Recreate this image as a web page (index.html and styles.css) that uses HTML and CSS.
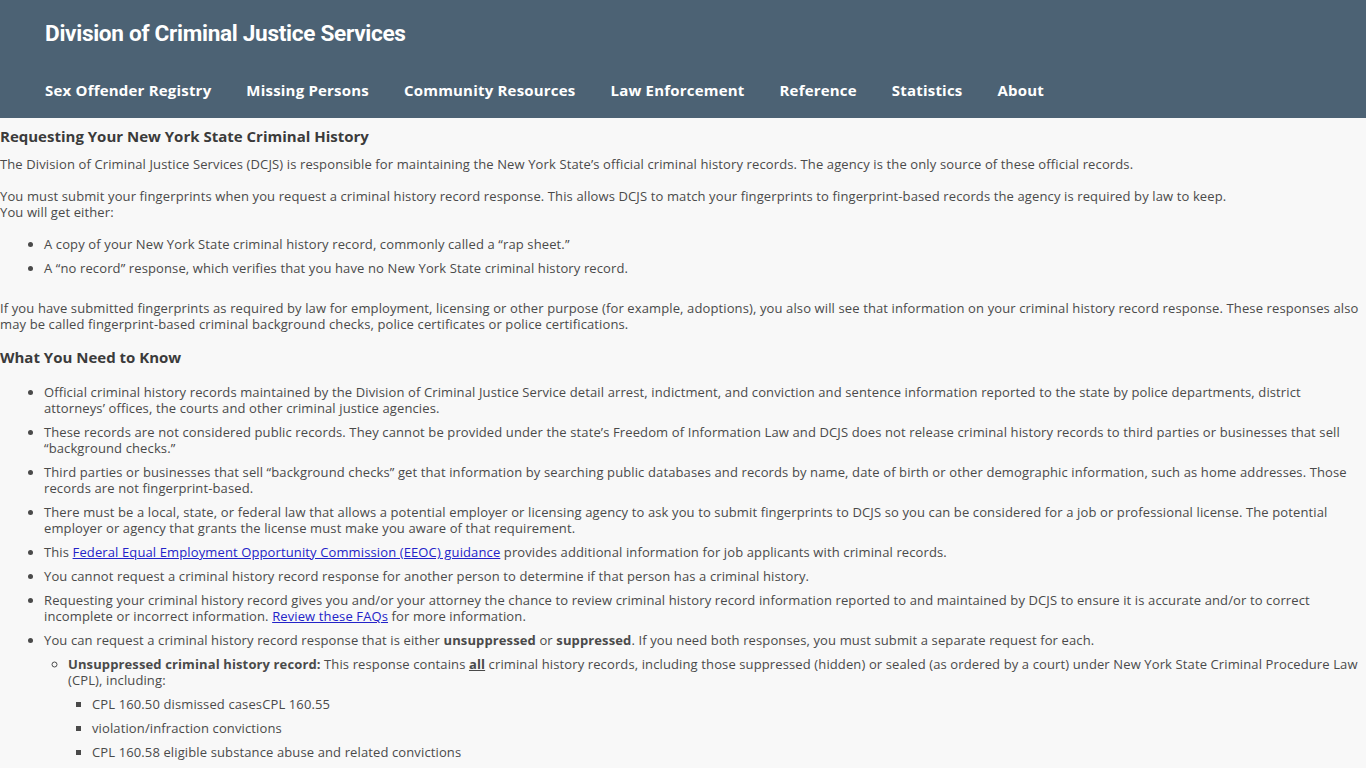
FILE: index.html
```html
<!DOCTYPE html>
<html lang="en">
<head>
    <meta charset="UTF-8">
    <title>Requesting Your New York State Criminal History | DCJS</title>
    <link rel="stylesheet" href="styles.css">
</head>
<body>
    <header class="site-header">
        <div class="site-title">Division of Criminal Justice Services</div>
        <nav class="main-nav">
            <a href="#">Sex Offender Registry</a>
            <a href="#">Missing Persons</a>
            <a href="#">Community Resources</a>
            <a href="#">Law Enforcement</a>
            <a href="#">Reference</a>
            <a href="#">Statistics</a>
            <a href="#">About</a>
        </nav>
    </header>
    <main class="content">
        <h2>Requesting Your New York State Criminal History</h2>
        <p>The Division of Criminal Justice Services (DCJS) is responsible for maintaining the New York State’s official criminal history records. The agency is the only source of these official records.</p>
        <p>You must submit your fingerprints when you request a criminal history record response. This allows DCJS to match your fingerprints to fingerprint-based records the agency is required by law to keep.<br>You will get either:</p>
        <ul>
            <li>A copy of your New York State criminal history record, commonly called a “rap sheet.”</li>
            <li>A “no record” response, which verifies that you have no New York State criminal history record.</li>
        </ul>
        <p>If you have submitted fingerprints as required by law for employment, licensing or other purpose (for example, adoptions), you also will see that information on your criminal history record response. These responses also may be called fingerprint-based criminal background checks, police certificates or police certifications.</p>
        <h2>What You Need to Know</h2>
        <ul>
            <li>Official criminal history records maintained by the Division of Criminal Justice Service detail arrest, indictment, and conviction and sentence information reported to the state by police departments, district attorneys’ offices, the courts and other criminal justice agencies.</li>
            <li>These records are not considered public records. They cannot be provided under the state’s Freedom of Information Law and DCJS does not release criminal history records to third parties or businesses that sell “background checks.”</li>
            <li>Third parties or businesses that sell “background checks” get that information by searching public databases and records by name, date of birth or other demographic information, such as home addresses. Those records are not fingerprint-based.</li>
            <li>There must be a local, state, or federal law that allows a potential employer or licensing agency to ask you to submit fingerprints to DCJS so you can be considered for a job or professional license. The potential employer or agency that grants the license must make you aware of that requirement.</li>
            <li>This <a href="#">Federal Equal Employment Opportunity Commission (EEOC) guidance</a> provides additional information for job applicants with criminal records.</li>
            <li>You cannot request a criminal history record response for another person to determine if that person has a criminal history.</li>
            <li>Requesting your criminal history record gives you and/or your attorney the chance to review criminal history record information reported to and maintained by DCJS to ensure it is accurate and/or to correct incomplete or incorrect information. <a href="#">Review these FAQs</a> for more information.</li>
            <li>You can request a criminal history record response that is either <strong>unsuppressed</strong> or <strong>suppressed</strong>. If you need both responses, you must submit a separate request for each.
                <ul>
                    <li><strong>Unsuppressed criminal history record:</strong> This response contains <strong><u>all</u></strong> criminal history records, including those suppressed (hidden) or sealed (as ordered by a court) under New York State Criminal Procedure Law (CPL), including:
                        <ul>
                            <li>CPL 160.50 dismissed casesCPL 160.55</li>
                            <li>violation/infraction convictions</li>
                            <li>CPL 160.58 eligible substance abuse and related convictions</li>
                        </ul>
                    </li>
                </ul>
            </li>
        </ul>
    </main>
</body>
</html>
```

FILE: styles.css
```css
body {
    margin: 0;
    background: #f8f8f8;
    color: #4a4a4a;
    font-family: 'Open Sans', 'Liberation Sans', sans-serif;
    font-size: 13px;
    line-height: 16px;
    letter-spacing: 0.12px;
}
.site-header {
    background: #4c6274;
    height: 118px;
    padding: 0 45px;
    box-sizing: border-box;
}
.site-title {
    color: #fff;
    font-family: 'Roboto', 'Open Sans', sans-serif;
    font-size: 22.6px;
    font-weight: bold;
    padding-top: 20px;
    line-height: 28px;
    letter-spacing: -0.3px;
}
.main-nav {
    display: flex;
    gap: 35px;
    margin-top: 33px;
}
.main-nav a {
    color: #fff;
    font-size: 15px;
    font-weight: bold;
    letter-spacing: 0.2px;
    text-decoration: none;
    line-height: 18px;
}
.content {
    padding-right: 4px;
}
.content h2 {
    font-size: 15px;
    font-weight: bold;
    color: #3b3b3b;
    letter-spacing: 0;
    margin: 9px 0 11px;
    line-height: 18px;
}
.content p {
    margin: 0 0 16px;
}
.content ul {
    margin: 0 0 24px;
    padding-left: 44px;
    list-style: disc;
}
.content h2 + ul {
    margin-top: 18px;
}
.content li {
    margin-bottom: 8px;
}
.content li ul {
    margin: 8px 0 0;
    padding-left: 24px;
    list-style: circle;
}
.content li ul ul {
    list-style: square;
}
.content a {
    color: #2323c8;
}
```
